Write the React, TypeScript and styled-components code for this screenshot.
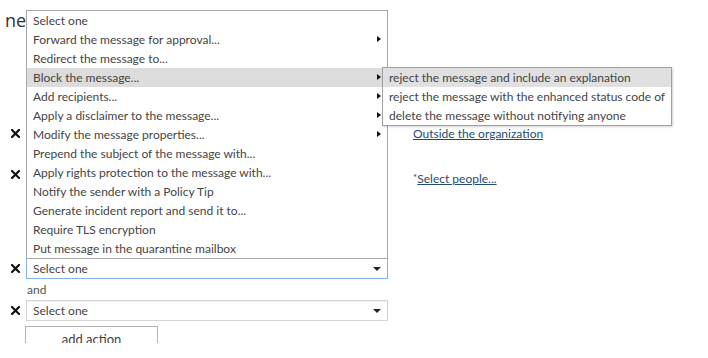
import React from 'react';
import styled, { createGlobalStyle } from 'styled-components';

const Global = createGlobalStyle`
  html, body { margin: 0; padding: 0; background: #fff; }
  body { font-family: Lato, "Open Sans", sans-serif; color: #444; }
`;

const Page = styled.div`
  position: relative;
  width: 708px;
  height: 343px;
  overflow: hidden;
  box-sizing: border-box;
  padding: 9px 0 0 5px;
  display: flex;
  flex-direction: column;
`;

const Heading = styled.h1`
  margin: 0;
  font-family: "Open Sans", sans-serif;
  font-weight: 400;
  font-size: 18px;
  line-height: 22px;
  height: 22px;
  color: #333;
`;

const Row = styled.div<{ $mt: number }>`
  display: grid;
  grid-template-columns: 21px 362px 1fr;
  align-items: center;
  height: 21px;
  margin-top: ${(p) => p.$mt}px;
`;

const XCell = styled.div`
  display: flex;
  align-items: center;
  justify-content: center;
  height: 21px;
`;

const SelectWrap = styled.div`
  position: relative;
  height: 21px;
`;

const Select = styled.div<{ $focused?: boolean }>`
  box-sizing: border-box;
  height: 21px;
  border: 1px solid ${(p) => (p.$focused ? '#86b2e6' : '#d4d4d4')};
  box-shadow: ${(p) => (p.$focused ? 'none' : 'inset 0 1px 1px rgba(0,0,0,0.06)')};
  background: #fff;
  display: flex;
  align-items: center;
  justify-content: space-between;
  padding: 0 6px 0 6px;
  font-size: 12px;
  color: #444;
`;

const DownArrow = styled.span`
  width: 0;
  height: 0;
  border-left: 4px solid transparent;
  border-right: 4px solid transparent;
  border-top: 4px solid #222;
`;

const Value = styled.div<{ $dy?: number }>`
  padding-left: 25px;
  font-size: 12px;
  transform: translateY(${(p) => p.$dy ?? 0}px);
`;

const Link = styled.a`
  color: #1e4b72;
  text-decoration: underline;
  cursor: pointer;
`;

const Star = styled.span`
  color: #444;
  font-size: 10px;
  vertical-align: top;
`;

const AndLabel = styled.div`
  margin: 2px 0 0 22px;
  height: 18px;
  line-height: 18px;
  font-size: 12px;
  color: #555;
`;

const AddButton = styled.button`
  margin: 5px 0 0 20px;
  width: 133px;
  height: 26px;
  flex-shrink: 0;
  border: 1px solid #b3b3b3;
  background: #fff;
  font-family: inherit;
  font-size: 13px;
  color: #444;
  padding: 0;
`;

const Menu = styled.ul`
  position: absolute;
  left: 0;
  bottom: calc(100% - 1px);
  width: 362px;
  box-sizing: border-box;
  margin: 0;
  padding: 0;
  list-style: none;
  border: 1px solid #a8a8a8;
  background: #fff;
  z-index: 5;
`;

const Item = styled.li<{ $active?: boolean }>`
  position: relative;
  height: 19px;
  line-height: 19px;
  padding-left: 6px;
  font-size: 12px;
  color: #444;
  white-space: nowrap;
  background: ${(p) => (p.$active ? '#dcdcdc' : 'transparent')};
`;

const RightArrow = styled.span`
  position: absolute;
  right: 6px;
  top: 6px;
  width: 0;
  height: 0;
  border-top: 3.5px solid transparent;
  border-bottom: 3.5px solid transparent;
  border-left: 4px solid #111;
`;

const SubMenu = styled.ul`
  position: absolute;
  left: 355px;
  top: -1px;
  width: 290px;
  box-sizing: border-box;
  margin: 0;
  padding: 0;
  list-style: none;
  border: 1px solid #a0a0a0;
  background: #fff;
  box-shadow: 1px 1px 2px rgba(0, 0, 0, 0.18);
  z-index: 6;
  overflow: hidden;
`;

const SubItem = styled.li<{ $active?: boolean }>`
  height: 19px;
  line-height: 19px;
  padding-left: 6px;
  font-size: 12px;
  color: #444;
  white-space: nowrap;
  background: ${(p) => (p.$active ? '#e0e0e0' : 'transparent')};
`;

const XIcon = () => (
  <svg width="9" height="9" viewBox="0 0 9 9">
    <path d="M1 1 L8 8 M8 1 L1 8" stroke="#111" strokeWidth="2.2" strokeLinecap="square" />
  </svg>
);

const items: { label: string; arrow?: boolean; active?: boolean }[] = [
  { label: 'Select one' },
  { label: 'Forward the message for approval...', arrow: true },
  { label: 'Redirect the message to...' },
  { label: 'Block the message...', arrow: true, active: true },
  { label: 'Add recipients...', arrow: true },
  { label: 'Apply a disclaimer to the message...', arrow: true },
  { label: 'Modify the message properties...', arrow: true },
  { label: 'Prepend the subject of the message with...' },
  { label: 'Apply rights protection to the message with...' },
  { label: 'Notify the sender with a Policy Tip' },
  { label: 'Generate incident report and send it to...' },
  { label: 'Require TLS encryption' },
  { label: 'Put message in the quarantine mailbox' },
];

const subItems = [
  'reject the message and include an explanation',
  'reject the message with the enhanced status code of',
  'delete the message without notifying anyone',
];

export default function App() {
  return (
    <>
      <Global />
      <Page>
        <Heading>new rule</Heading>
        <Row $mt={92}>
          <XCell><XIcon /></XCell>
          <SelectWrap><Select>The sender is located...<DownArrow /></Select></SelectWrap>
          <Value><Link>Outside the organization</Link></Value>
        </Row>
        <Row $mt={20}>
          <XCell><XIcon /></XCell>
          <SelectWrap><Select>The recipient is...<DownArrow /></Select></SelectWrap>
          <Value $dy={4}><Star>*</Star><Link>Select people...</Link></Value>
        </Row>
        <Row $mt={73}>
          <XCell><XIcon /></XCell>
          <SelectWrap>
            <Select $focused>Select one<DownArrow /></Select>
            <Menu>
              {items.map((it) => (
                <Item key={it.label} $active={it.active}>
                  {it.label}
                  {it.arrow && <RightArrow />}
                  {it.active && (
                    <SubMenu>
                      {subItems.map((s, i) => (
                        <SubItem key={s} $active={i === 0}>{s}</SubItem>
                      ))}
                    </SubMenu>
                  )}
                </Item>
              ))}
            </Menu>
          </SelectWrap>
          <div />
        </Row>
        <AndLabel>and</AndLabel>
        <Row $mt={1}>
          <XCell><XIcon /></XCell>
          <SelectWrap><Select>Select one<DownArrow /></Select></SelectWrap>
          <div />
        </Row>
        <AddButton>add action</AddButton>
      </Page>
    </>
  );
}
